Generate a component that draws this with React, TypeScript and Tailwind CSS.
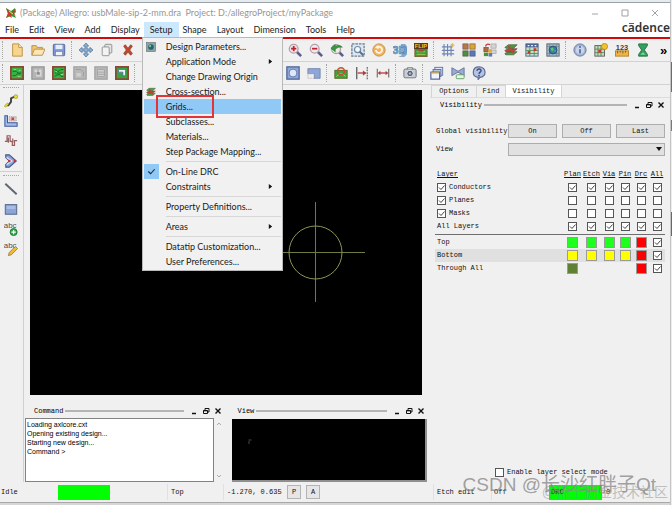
import { useState } from 'react';
import type { ReactNode } from 'react';
import clsx from 'clsx';

const MONO = "font-['Liberation_Mono',monospace] text-[7px] leading-[9px]";
const UI = "font-['Lato',sans-serif] text-[9px] leading-[15px]";

const ICONS: Record<string, ReactNode> = {
  newFile: <><path d="M3 1h7l4 4v10H3z" fill="#f6d58c" stroke="#b98b3c" /><path d="M10 1v4h4" fill="#fff3d0" stroke="#b98b3c" /></>,
  open: <><path d="M1 14V3h5l1 2h6v3" fill="#f2c773" stroke="#b58a45" /><path d="M4 7h12l-3 7H1z" fill="#fbe6b8" stroke="#b58a45" /></>,
  save: <><rect x="1.5" y="1.5" width="13" height="13" rx="1" fill="#7d98d6" stroke="#4d5f94" /><rect x="4" y="2" width="8" height="5" fill="#e7edf9" /><rect x="4" y="9.500" width="8" height="5" fill="#f2f2f2" stroke="#6b7690" strokeWidth=".7" /></>,
  move: <><path d="M8 0l3 3.500H9.200v3.300h3.300V5L16 8l-3.500 3V9.200H9.200v3.300H11L8 16l-3-3.500h1.800V9.200H3.500V11L0 8l3.500-3v1.800h3.300V3.500H5z" fill="#8fb1d3" stroke="#456d95" strokeWidth=".8" /></>,
  copy: <><rect x="5.500" y="1.500" width="8" height="10" rx="1" fill="#e4e4e4" stroke="#8a8a8a" /><rect x="2.500" y="4.500" width="8" height="10" rx="1" fill="#f3f3f3" stroke="#8a8a8a" /></>,
  del: <path d="M3 3.500l2-1.500L8 6l3-4 2 1.500L10 8l3 4-2 2-3-3.500L5 14l-2-2 3-4z" fill="#c2482c" stroke="#7c2f1c" strokeWidth=".7" />,
  zoomIn: <><path d="M10 10l5 5" stroke="#5d5e8e" strokeWidth="3" /><circle cx="6.500" cy="6.500" r="5" fill="#efe9ef" stroke="#b79da6" strokeWidth="1.500" /><path d="M6.500 3.500v6M3.500 6.500h6" stroke="#c2202c" strokeWidth="2" /></>,
  zoomOut: <><path d="M10 10l5 5" stroke="#5d5e8e" strokeWidth="3" /><circle cx="6.500" cy="6.500" r="5" fill="#efe9ef" stroke="#b79da6" strokeWidth="1.500" /><path d="M3.500 6.500h6" stroke="#c2202c" strokeWidth="2" /></>,
  zoomPrev: <><path d="M10 10l5 5" stroke="#5d5e8e" strokeWidth="3" /><circle cx="7" cy="7" r="5" fill="#f3e9e4" stroke="#a9a0a0" strokeWidth="1.500" /><path d="M1 6l5-4v2c4-2 7-1 8 1-3-1-5 0-8 2v3z" fill="#2f9c3d" stroke="#1f6b2a" strokeWidth=".6" /></>,
  zoomFit: <><rect x="1" y="1" width="14" height="14" fill="#dfe7ee" stroke="#6a7f94" strokeWidth="1.500" strokeDasharray="3 1" /><circle cx="7.500" cy="7.500" r="3.500" fill="#f4f8fb" stroke="#6e8aa6" strokeWidth="1.400" /><path d="M10 10l4 4" stroke="#5d6f90" strokeWidth="2.200" /></>,
  refresh: <><circle cx="8" cy="8" r="7" fill="#f3b45c" stroke="#c08a48" /><path d="M4.500 8a3.500 3.500 0 1 0 1.500-3" fill="none" stroke="#fff6e4" strokeWidth="2" /><path d="M7.500 2v5l-4-2z" fill="#fff6e4" /></>,
  green: <><rect x="1" y="1" width="14" height="14" fill="#38b344" stroke="#8a4a35" strokeWidth="2" /><path d="M3 6h4l2 2h4M3 11h3l2-2h4" stroke="#1b6425" fill="none" strokeWidth="1" /><path d="M4 4h3M10 5h2M9 12h3" stroke="#92df8c" /></>,
  greenNet: <><rect x="1" y="1" width="14" height="14" fill="#38b344" stroke="#8a4a35" strokeWidth="2" /><path d="M3 4l3 2h2l2-2h3M3 12l3-2h3l2 2h2M3 8h10" stroke="#155c20" fill="none" strokeWidth="1" /><path d="M4 6l2 1M10 10l3-1" stroke="#b9e8a8" /></>,
  greenShape: <><rect x="1" y="1" width="14" height="14" fill="#38a344" stroke="#8a4a35" strokeWidth="2" /><path d="M4 4h8v7H9V7H4z" fill="#edf4ff" stroke="#4963a8" strokeWidth=".8" /></>,
  grayPad: <><rect x="1" y="1" width="14" height="14" fill="#b4b4b4" stroke="#989898" strokeWidth="1.500" /><path d="M4 4h3v3H4zM9 4h3v8H6V9h3z" fill="#d8d8d8" /><rect x="7" y="7" width="3" height="3" fill="#8a8a8a" /></>,
  grayBox: <><rect x="1" y="1" width="14" height="14" fill="#b8b8b8" stroke="#a3a3a3" strokeWidth="1.500" /><path d="M3 4h6l3 3v5" stroke="#9a9a9a" fill="none" /><rect x="4" y="8" width="5" height="4" fill="#cecece" /></>,
  grayList: <><rect x="1" y="1" width="14" height="14" fill="#b8b8b8" stroke="#a3a3a3" strokeWidth="1.500" /><path d="M4 4h8v8H4zM4 7h8M4 9.500h8" stroke="#a2a2a2" fill="#cfcfcf" /></>,
  blueCircle: <><rect x="1" y="1" width="14" height="14" fill="#8ea7d6" stroke="#52679a" strokeWidth="1.500" /><circle cx="8" cy="8" r="4.500" fill="#dfe8f7" stroke="#5b74ad" /></>,
  blueCut: <><path d="M1 3h14v11H8V9H1z" fill="#8ea7d6" stroke="#7285ad" /><path d="M1 9h7v5H1z" fill="#eee" stroke="#aaa" strokeDasharray="1 1" /></>,
  board: <><rect x="1" y="5" width="14" height="9" fill="#3fa63a" stroke="#5c6f2d" strokeWidth="1.200" /><path d="M3 12l3-3h4l3 3" stroke="#b9dd7a" fill="none" /><circle cx="8" cy="6" r="4" fill="none" stroke="#c84b32" strokeWidth="1.600" /></>,
  spaceIn: <><path d="M2 1v14" stroke="#555" strokeWidth="1.400" /><path d="M14 1v14" stroke="#666" strokeWidth="1.400" strokeDasharray="2 1" /><path d="M3 8h9" stroke="#b33a3a" strokeWidth="1.500" /><path d="M9 5l4 3-4 3z" fill="#b33a3a" /></>,
  dim: <><path d="M1.500 3v10M14.500 3v10" stroke="#777" strokeWidth="1.400" /><path d="M4 8h8" stroke="#b33a3a" strokeWidth="1.500" /><path d="M5 5.500L2 8l3 2.500zM11 5.500L14 8l-3 2.500z" fill="#b33a3a" /></>,
  camera: <><rect x="1" y="3.500" width="14" height="10" rx="1.500" fill="#c9cdd2" stroke="#666d78" /><path d="M5 3.500V2h6v1.500" stroke="#666d78" fill="#ddd" /><circle cx="8" cy="8.500" r="3.700" fill="#55617a" stroke="#eee" /><circle cx="8" cy="8.500" r="1.500" fill="#a7b8d4" /></>,
  grid: <><path d="M3.500 1v14M7.500 1v14M11.500 3v12M1 4.500h12M1 8.500h14M1 12.500h14" stroke="#6e86b5" strokeWidth="1.300" /><path d="M13 0v5M10.500 2.500h5M11.300 1l3.400 3M14.700 1l-3.400 3" stroke="#e0b04a" strokeWidth=".9" /></>,
  palette: <><rect x="1" y="1" width="6" height="6" fill="#b57a42" stroke="#745" strokeWidth=".7" /><rect x="9" y="1" width="6" height="6" fill="#d8a72e" stroke="#745" strokeWidth=".7" /><rect x="1" y="9" width="6" height="6" fill="#4f8e3c" stroke="#454" strokeWidth=".7" /><rect x="9" y="9" width="6" height="6" fill="#5b77bd" stroke="#456" strokeWidth=".7" /></>,
  paletteMove: <><path d="M9 1h6v5H9zM9 8h6v4H9z" fill="#d4d4d4" stroke="#999" strokeWidth=".7" /><rect x="1" y="5" width="5" height="5" fill="#b06a3e" stroke="#644" strokeWidth=".7" /><rect x="6" y="7" width="4" height="4" fill="#dfae31" /><rect x="1" y="11" width="5" height="4" fill="#4f8e3c" /><rect x="6.500" y="11.500" width="4" height="4" fill="#5b77bd" /><path d="M3 4c0-3 3-3 5-2" stroke="#c33" fill="none" strokeWidth="1.500" /></>,
  layers: <><path d="M1 12l4-2h10l-4 3.500H2z" fill="#4d9d3e" stroke="#3c4a2b" strokeWidth=".7" /><path d="M1 8.500l4-2h10l-4 3.500H2z" fill="#c4463a" stroke="#5b342b" strokeWidth=".7" /><path d="M1 5l4-3h10l-4 4H2z" fill="#4f9b43" stroke="#3c4a2b" strokeWidth=".7" /><path d="M5 3l6 9" stroke="#a8503c" strokeWidth="2" /></>,
  constraint: <><rect x="1" y="1" width="14" height="14" fill="#c7dcd1" stroke="#4c6379" /><path d="M1 1h14v4H1z" fill="#4a6596" /><path d="M3 3h2M7 3h2M11 3h2" stroke="#fff" strokeWidth="1.300" /><path d="M5.500 5v10M10.500 5v10M1 8.500h14M1 12h14" stroke="#4f8f52" /><path d="M3 9h3v3H3zM10 6h3v3h-3z" fill="#c8372d" /></>,
  world: <><rect x="1" y="1" width="14" height="14" fill="#a9b8c4" stroke="#51606f" /><path d="M1 4h14M1 12h14M4 1v14M12 1v14" stroke="#6d7b89" strokeWidth=".7" /><circle cx="8" cy="8" r="4.500" fill="#327eae" stroke="#24506c" /><path d="M5 6l3-1 1 2-2 3zM9 9l2-1v2z" fill="#63c26a" /></>,
  info: <><circle cx="8" cy="8" r="7" fill="#9fb0cd" stroke="#66779b" /><circle cx="8" cy="8" r="5" fill="#c9d4e8" /><path d="M8 7v5" stroke="#3c62b0" strokeWidth="1.800" /><circle cx="8" cy="4.500" r="1.100" fill="#3c62b0" /></>,
  report: <><rect x="1" y="3" width="11" height="12" fill="#c6dcc0" stroke="#555" /><path d="M4.500 3v12M8 3v12M1 7h11M1 11h11" stroke="#52804f" /><path d="M5 8h3v3H5z" fill="#c8372d" /><circle cx="12" cy="4" r="3.500" fill="#f2c32c" stroke="#b68a17" /></>,
  measure: <><rect x=".5" y="9" width="15" height="6" fill="#eeb548" stroke="#b27d23" /><path d="M3 9v3M6 9v2M9 9v3M12 9v2" stroke="#83591a" /><text x="8" y="7.500" textAnchor="middle" fontSize="8.500" fontWeight="700" fontFamily="Liberation Sans" fill="#3c3c50">123</text></>,
  hourglass: <><path d="M3 1h10v2L9.500 8l3.500 5v2H3v-2l3.500-5L3 3z" fill="#31a15b" stroke="#236c41" /><path d="M5 13.500l3-3 3 3z" fill="#7fd79b" /></>,
  sheets: <><rect x="5.500" y="1.500" width="9" height="9" fill="#dfe6f5" stroke="#5a6c9c" /><rect x="3.500" y="4" width="9" height="8" fill="#b8c5e4" stroke="#5a6c9c" /><rect x="1" y="7" width="10" height="8" fill="#f1f4fb" stroke="#4c5f95" strokeWidth="1.300" /><path d="M1.500 8h9" stroke="#e0b33c" strokeWidth="1.500" /></>,
  bowtie: <><path d="M1 2l7 4 7-4v9L8 7l-7 4z" fill="#9aabd4" stroke="#5f6f9b" /><rect x="6" y="10" width="9" height="4.500" rx="1" fill="#e8f5e6" stroke="#5c9a5c" /></>,
  help: <><path d="M8 1c9 0 9 12 1 12l-2 2.500V13C-1 12 0 1 8 1z" fill="#b6c2de" stroke="#5d6c94" strokeWidth="1.300" /><path d="M5.800 5.500c0-3 5-2.500 4.500 0-.3 1.500-2 1.500-2.200 3.500" fill="none" stroke="#34508f" strokeWidth="1.700" /><circle cx="8" cy="11" r="1" fill="#34508f" /></>,
  route: <><path d="M2 13h3l3-4V5l4-2h3" fill="none" stroke="#444" strokeWidth="2.200" /><path d="M0 14l4-4 1 2-3 3z" fill="#e5d62e" stroke="#9a901e" strokeWidth=".5" /><circle cx="13.500" cy="3" r="2.200" fill="#e9dc3d" stroke="#988d22" strokeWidth=".7" /></>,
  slide: <><path d="M1 2h3v8h11v4H1z" fill="#a7bbe7" stroke="#3e5a9d" strokeWidth="1.200" /><path d="M6 3h8v5H6z" fill="#e3c4c4" stroke="#998" strokeDasharray="1 1" /><path d="M8.500 4h3v3h-3z" fill="#bd4b4b" /></>,
  delay: <path d="M1 8.500h2.500V2h3.500v6.500h2.500V13h2.500V7.500h3M5 4v6M10 5v5" fill="none" stroke="#96605f" strokeWidth="1.400" />,
  vertex: <><path d="M2 1h4l8 7-8 7H2v-3l4-4-4-4z" fill="#8fa6d6" stroke="#3e5590" strokeWidth="1.200" /><path d="M3 4l6 4-6 4" fill="none" stroke="#e5ecfa" strokeWidth="1.200" /><circle cx="6" cy="8" r="1.500" fill="#c33" /><circle cx="12.500" cy="8" r="1.500" fill="#c33" /></>,
  line: <path d="M1.500 2l13 12" stroke="#5d6673" strokeWidth="2.200" />,
  rect: <><rect x="1.500" y="3" width="13" height="11" fill="#8ba5d8" stroke="#5c6c8d" strokeWidth="1.200" /><path d="M3 4.500h10V8H3z" fill="#a9bde6" /></>,
  textAdd: <><text x="7" y="7" textAnchor="middle" fontSize="9" fontFamily="Liberation Sans" fill="#4b4b4b">abc</text><circle cx="11" cy="11.500" r="4" fill="#31a84b" stroke="#1c7431" /><path d="M11 9v5M8.500 11.500h5" stroke="#fff" strokeWidth="1.300" /></>,
  textEdit: <><text x="7" y="7" textAnchor="middle" fontSize="9" fontFamily="Liberation Sans" fill="#4b4b4b">abc</text><path d="M13 5l2.500 2.500-7 7-3.500 1 1-3.500z" fill="#efb93a" stroke="#8b6a24" strokeWidth=".8" /></>,
  param: <><rect x="1" y="1" width="14" height="14" fill="#90a3a6" stroke="#5c6c70" /><circle cx="8" cy="8" r="4.500" fill="#23676b" /><circle cx="6.500" cy="6.500" r="1.700" fill="#7fd1b4" /></>,
  threeD: <><path d="M9 1h5l2 3v9l-3 3H6l4-2z" fill="#86a9cb" /><text x="7.500" y="13" textAnchor="middle" fontSize="13" fontWeight="700" fontFamily="Liberation Sans" fill="#7fb0dc" stroke="#4b78a5" strokeWidth=".6">3D</text></>,
  flip: <><rect x="0" y="0" width="16" height="7" fill="#5a3823" /><text x="8" y="6" textAnchor="middle" fontSize="6.500" fontWeight="700" fontFamily="Liberation Sans" fill="#f4c32c">FLIP</text><rect x="1" y="7.500" width="14" height="8" fill="#3f9b3d" stroke="#7b5c30" /><path d="M3 10h10M3 13h10" stroke="#a7cf58" /><path d="M5 9h6" stroke="#c33" strokeWidth="1.500" /></>,
};

type MenuEntry = { label: string; icon?: string; submenu?: boolean; checked?: boolean; active?: boolean } | null;

const SETUP_MENU: MenuEntry[] = [
  { label: 'Design Parameters...', icon: 'param' },
  { label: 'Application Mode', submenu: true },
  { label: 'Change Drawing Origin' },
  { label: 'Cross-section...', icon: 'layers' },
  { label: 'Grids...', active: true },
  { label: 'Subclasses...' },
  { label: 'Materials...' },
  { label: 'Step Package Mapping...' },
  null,
  { label: 'On-Line DRC', checked: true },
  { label: 'Constraints', submenu: true },
  null,
  { label: 'Property Definitions...' },
  null,
  { label: 'Areas', submenu: true },
  null,
  { label: 'Datatip Customization...' },
  { label: 'User Preferences...' },
];

const MENUS = ['File', 'Edit', 'View', 'Add', 'Display', 'Setup', 'Shape', 'Layout', 'Dimension', 'Tools', 'Help'];

const COLUMNS = ['Plan', 'Etch', 'Via', 'Pin', 'Drc', 'All'];

const GROUPS = [
  { label: 'Conductors', own: true, on: true },
  { label: 'Planes', own: true, on: false },
  { label: 'Masks', own: true, on: false },
  { label: 'All Layers', own: false, on: true },
];

const LAYERS = [
  { label: 'Top', colors: ['bg-[#1eff1e]', 'bg-[#1eff1e]', 'bg-[#1eff1e]', 'bg-[#1eff1e]', 'bg-[#ff0000]'] },
  { label: 'Bottom', colors: ['bg-[#ffff00]', 'bg-[#ffff00]', 'bg-[#ffff00]', 'bg-[#ffff00]', 'bg-[#ff0000]'], selected: true },
  { label: 'Through All', colors: ['bg-[#5f8133]', '', '', '', 'bg-[#ff0000]'] },
];

function Icon({ name, className = 'size-[14px]' }: { name: string; className?: string }) {
  return <svg viewBox="0 0 16 16" className={clsx('block', className)} aria-hidden="true">{ICONS[name]}</svg>;
}

function Tools({ names, vertical }: { names: string[]; vertical?: boolean }) {
  return (
    <div className={clsx('flex shrink-0', vertical && 'flex-col')}>
      {names.map(n => (
        <button key={n} type="button" aria-label={n} className={clsx('flex items-center justify-center', vertical ? 'h-5 w-full' : 'h-[22px] w-[21px]')}>
          <Icon name={n} />
        </button>
      ))}
    </div>
  );
}

function Handle() {
  return <div className="mx-[2px] h-[18px] w-[2px] shrink-0 self-center border-l border-dotted border-[#a5a5a5]" />;
}

function Check({ label, initial = false, text }: { label: string; initial?: boolean; text?: boolean }) {
  const [on, setOn] = useState(initial);
  return (
    <label className="inline-flex items-center gap-[3px] align-middle">
      <span className="relative block size-[9px]">
        <input
          type="checkbox"
          aria-label={label}
          checked={on}
          onChange={e => setOn(e.target.checked)}
          className="block size-[9px] appearance-none border border-[#555] bg-white"
        />
        {on && (
          <svg viewBox="0 0 9 9" className="pointer-events-none absolute inset-0 size-[9px]">
            <path d="M2 4.500l2 2L7.500 2.500" fill="none" stroke="#444" />
          </svg>
        )}
      </span>
      {text && <span>{label}</span>}
    </label>
  );
}

function DockHeader({ title }: { title: string }) {
  return (
    <div className={clsx('flex h-[14px] items-center pl-[9px] text-black', MONO)}>
      <span>{title}</span>
      <div className="ml-[2px] h-[2px] flex-1 bg-[#b4b4b4]" />
      <div className="ml-1 flex">
        <button type="button" aria-label="Minimize" className="flex h-3 w-3 items-center justify-center">
          <svg viewBox="0 0 8 8" className="size-2"><path d="M2 6.500h4" stroke="#111" strokeWidth="1.500" /></svg>
        </button>
        <button type="button" aria-label="Float" className="flex h-3 w-3 items-center justify-center">
          <svg viewBox="0 0 8 8" className="size-2"><path d="M3 3V1.500h4V5H5.500M1.500 3.500h4v3h-4zM3 1.500h4M1.500 3.800h4" fill="none" stroke="#111" /></svg>
        </button>
        <button type="button" aria-label="Close" className="flex h-3 w-3 items-center justify-center">
          <svg viewBox="0 0 8 8" className="size-2"><path d="M1.500 1.500l5 5M6.500 1.500l-5 5" stroke="#111" strokeWidth="1.400" /></svg>
        </button>
      </div>
    </div>
  );
}

function SetupMenu() {
  return (
    <ul role="menu" className={clsx('absolute -left-[2px] top-full z-20 w-[141px] border border-[#b9b9b9] bg-[#f1f1f1] p-px text-[#1a1a1a]', UI)}>
      {SETUP_MENU.map((item, i) =>
        item === null ? (
          <li key={i} role="separator" className="ml-[22px] flex h-[5px] items-center"><span className="h-px w-full bg-[#d7d7d7]" /></li>
        ) : (
          <li key={item.label} role="none" className="relative">
            <button type="button" role="menuitem" className={clsx('flex h-[15px] w-full items-center text-left', item.active && 'bg-[#90c8f6]')}>
              <span className={clsx('mr-[7px] flex size-[15px] items-center justify-center', item.checked && 'bg-[#90c8f6]')}>
                {item.icon && <Icon name={item.icon} className="size-[10px]" />}
                {item.checked && <svg viewBox="0 0 10 10" className="size-[9px]"><path d="M1.500 5l2.500 2.500 4.500-5" fill="none" stroke="#222" strokeWidth="1.200" /></svg>}
              </span>
              <span className="flex-1">{item.label}</span>
              {item.submenu && <svg viewBox="0 0 6 6" className="mr-2 size-[5px]"><path d="M1 0l4 3-4 3z" fill="#111" /></svg>}
            </button>
            {item.active && <div className="pointer-events-none absolute -top-[4px] left-[12px] z-10 h-[23px] w-[58px] border-2 border-[#e23338]" />}
          </li>
        )
      )}
    </ul>
  );
}

function TitleBar() {
  return (
    <header className="bg-white">
      <div className="h-[2px] bg-[#e6ebee]" />
      <div className="flex h-5 items-center border-t border-[#9aa3aa] pl-[5px]">
        <svg viewBox="0 0 12 12" className="size-3">
          <path d="M1 1l5 3 4-3 1 4-2 2 2 4-5-2-5 2 2-4z" fill="#2f9a38" />
          <path d="M1 1l4 4 2 6-3-2-3 2 2-5zM7 5l4-3-2 4 2 4z" fill="#d8342b" />
          <path d="M4 4l4 3" stroke="#f2e04c" />
        </svg>
        <h1 className={clsx('ml-[3px] flex-1 whitespace-pre text-[#969696]', UI)}>
          {'(Package) Allegro: usbMale-sip-2-mm.dra  Project: D:/allegroProject/myPackage'}
        </h1>
        {['M1 5h6', 'M1 1h6v6H1z', 'M1 1l6 6M7 1l-6 6'].map((d, i) => (
          <button key={d} type="button" aria-label={['Minimize', 'Maximize', 'Close'][i]} className="flex h-full w-[30px] items-center justify-center">
            <svg viewBox="0 0 8 8" className="size-2"><path d={d} fill="none" stroke="#8a8a8a" strokeWidth=".8" /></svg>
          </button>
        ))}
      </div>
      <nav className={clsx('flex h-[15px] text-[#1c1c1c]', UI)}>
        {MENUS.map(m => (
          <div key={m} className="relative -ml-px -mr-px">
            <button type="button" className={clsx('h-[15px] px-[6px]', m === 'Setup' && 'bg-[#cce8ff]')}>{m}</button>
            {m === 'Setup' && <SetupMenu />}
          </div>
        ))}
        <div className="ml-auto font-['Noto_Sans',sans-serif] text-[12px] leading-[12px] font-semibold text-[#333]">
          c<span className="relative">a<span className="absolute left-px top-[4px] h-px w-[5px] bg-[#e0243a]" /></span>dence
        </div>
      </nav>
      <div className="h-[2px] bg-[#cc0c0c]" />
    </header>
  );
}

function Toolbars() {
  return (
    <div>
      <div className="flex h-[23px] items-center border-b border-[#d2d2d2]">
        <Handle />
        <Tools names={['newFile', 'open', 'save']} />
        <Handle />
        <Tools names={['move', 'copy', 'del']} />
        <div className="ml-auto flex items-center">
          <Tools names={['zoomIn', 'zoomOut', 'zoomPrev', 'zoomFit', 'refresh', 'threeD', 'flip']} />
          <Handle />
          <Tools names={['grid', 'palette', 'paletteMove', 'layers', 'constraint', 'world']} />
          <Handle />
          <Tools names={['info', 'report', 'measure', 'hourglass']} />
          <button type="button" className="w-[17px] pl-1 font-['Liberation_Sans',sans-serif] text-[13px] leading-[15px] font-bold text-black">»</button>
        </div>
      </div>
      <div className="flex h-[23px] items-center border-b border-[#d2d2d2]">
        <Handle />
        <Tools names={['green', 'grayPad', 'greenNet', 'grayBox', 'grayList', 'greenShape']} />
        <Handle />
        <div className="ml-auto flex w-[388px] items-center">
          <Tools names={['blueCircle', 'blueCut']} />
          <Handle />
          <Tools names={['board', 'spaceIn', 'dim']} />
          <Handle />
          <Tools names={['camera']} />
          <Handle />
          <Tools names={['sheets', 'bowtie', 'help']} />
        </div>
      </div>
    </div>
  );
}

function VisibilityPanel() {
  return (
    <aside className={clsx('flex w-[240px] shrink-0 flex-col text-[#111]', MONO)}>
      <div role="tablist" className="flex h-[13px] items-end border-b border-[#dcdcdc] pl-px">
        <button type="button" role="tab" className="h-3 w-[46px] border border-b-0 border-[#d5d5d5]">Options</button>
        <button type="button" role="tab" className="h-3 w-[29px] border border-b-0 border-l-0 border-[#d5d5d5]">Find</button>
        <button type="button" role="tab" aria-selected="true" className="h-[13px] w-14 border border-b-0 border-l-0 border-[#d5d5d5] bg-white">Visibility</button>
      </div>
      <div className="pl-px pr-[3px]"><DockHeader title="Visibility" /></div>
      <div className="mt-3 flex items-center gap-[5px] pl-[6px] pr-[5px]">
        <span className="w-[67px] whitespace-nowrap">Global visibility</span>
        {['On', 'Off', 'Last'].map(b => (
          <button key={b} type="button" className="h-[14px] flex-1 border border-[#adadad] bg-[#e1e1e1]">{b}</button>
        ))}
      </div>
      <div className="mt-[5px] flex items-center gap-[5px] pl-[6px] pr-[5px]">
        <label htmlFor="view" className="w-[67px]">View</label>
        <div className="relative flex-1">
          <select id="view" className="block h-[13px] w-full appearance-none border border-[#adadad] bg-[#e1e1e1]"><option></option></select>
          <svg viewBox="0 0 6 4" className="pointer-events-none absolute right-[3px] top-[4px] h-1 w-[6px]"><path d="M0 0h6L3 4z" fill="#111" /></svg>
        </div>
      </div>
      <table className="mt-3 ml-[5px] mr-[5px] table-fixed border-collapse text-center">
        <thead>
          <tr className="h-[13px]">
            <th className="p-0 pl-[2px] text-left font-normal underline">Layer</th>
            {COLUMNS.map(c => (
              <th key={c} className={clsx('p-0 font-normal underline', c === 'Plan' || c === 'Etch' ? 'w-[19px]' : 'w-4')}>{c}</th>
            ))}
          </tr>
        </thead>
        <tbody>
          {GROUPS.map(g => (
            <tr key={g.label} className="h-[13px]">
              <td className="p-0 pl-[2px] text-left leading-[9px]">{g.own ? <Check label={g.label} initial text /> : g.label}</td>
              {COLUMNS.map(c => <td key={c} className="p-0 leading-[9px]"><Check label={`${g.label} ${c}`} initial={g.on} /></td>)}
            </tr>
          ))}
          <tr className="h-[3px]"><td colSpan={7} className="p-0"><div className="h-px bg-[#6e6e6e]" /></td></tr>
          {LAYERS.map(l => (
            <tr key={l.label} className={clsx('h-[13px]', l.selected && 'bg-[#e0e0e0]')}>
              <td className="p-0 pl-[2px] text-left">{l.label}</td>
              {l.colors.map((c, i) => (
                <td key={i} className="p-0 leading-[11px]">
                  {c && <button type="button" aria-label={`${l.label} ${COLUMNS[i]} color`} className={clsx('inline-block size-[11px] border border-[#9a9a9a] align-middle', c)} />}
                </td>
              ))}
              <td className="p-0 leading-[9px]"><Check label={`${l.label} All`} initial /></td>
            </tr>
          ))}
        </tbody>
      </table>
      <div className="mt-auto flex pb-[5px] pl-[65px]">
        <Check label="Enable layer select mode" text />
      </div>
    </aside>
  );
}

function Workspace() {
  return (
    <main className="flex min-w-0 flex-1 flex-col">
      <div className="flex flex-1 pt-[5px] pr-2 pb-px pl-[6px]">
        <div className="relative flex-1 overflow-hidden bg-black">
          <svg viewBox="0 0 100 100" className="absolute left-[235px] top-[112px] size-[100px]">
            <g fill="none" stroke="#6f7c3e" strokeWidth="1"><path d="M0 50.500h100M50.500 0v100" /><circle cx="50.500" cy="50.500" r="26.500" stroke="#8c965a" /></g>
          </svg>
        </div>
      </div>
      <div className="flex gap-[5px] pt-2 pr-[3px] pl-px">
        <section className="flex flex-1 flex-col">
          <DockHeader title="Command" />
          <div className="flex h-[64px]">
            <textarea
              aria-label="Command log"
              readOnly
              className="h-full min-w-0 flex-1 resize-none overflow-hidden border border-[#828282] bg-white px-px pt-px font-['Liberation_Sans',sans-serif] text-[7px] leading-[9px] text-black"
              value={'Loading axlcore.cxt\nOpening existing design...\nStarting new design...\nCommand >'}
            />
            <div className="flex w-[10px] flex-col items-center justify-between py-1">
              <svg viewBox="0 0 6 4" className="h-1 w-[6px]"><path d="M1 3l2-2 2 2" fill="none" stroke="#aaa" /></svg>
              <svg viewBox="0 0 6 4" className="h-1 w-[6px]"><path d="M1 1l2 2 2-2" fill="none" stroke="#aaa" /></svg>
            </div>
          </div>
        </section>
        <section className="flex flex-1 flex-col">
          <DockHeader title="View" />
          <div className="mt-px ml-[3px] h-[63px] border-r-2 border-b-2 border-[#8f8f8f] bg-black">
            <svg viewBox="0 0 4 5" className="mt-5 ml-4 h-[5px] w-1"><path d="M.5 1h3M1 2v3" stroke="#5a5a5a" strokeWidth=".8" /></svg>
          </div>
        </section>
      </div>
    </main>
  );
}

function StatusBar() {
  return (
    <footer className={clsx('flex h-5 items-center text-[#111]', MONO)}>
      <div className="w-[58px] pl-px">Idle</div>
      <div className="mr-[57px] h-[15px] w-[52px] bg-[#00ff00]" />
      <div className="h-4 w-14 border-l border-[#e0e0e0] pl-[3px] leading-[16px]">Top</div>
      <div className="h-4 w-[61px] whitespace-nowrap border-l border-[#e0e0e0] pl-[3px] leading-[16px]">-1.270, 0.635</div>
      <div className="flex gap-[5px] pl-[3px]">
        <button type="button" className="h-[14px] w-[14px] border border-[#b4b4b4] bg-[#e6e6e6]">P</button>
        <button type="button" className="h-[14px] w-[14px] border border-[#b4b4b4] bg-[#e6e6e6]">A</button>
      </div>
      <div className="ml-auto flex w-[237px] items-center">
        <div className="h-4 w-[58px] border-l border-[#e0e0e0] pl-[3px] leading-[16px]">Etch edit</div>
        <div className="h-4 w-[58px] border-l border-[#e0e0e0] pl-[2px] leading-[16px]">Off</div>
        <div className="h-[15px] w-[53px] bg-[#00ff00] pl-[2px] leading-[15px]">DRC</div>
        <div className="pl-1">0</div>
      </div>
    </footer>
  );
}

export default function App() {
  return (
    <div className="flex min-h-screen bg-[#f0f0f0]">
      <div className="relative flex min-w-0 flex-1 flex-col">
        <TitleBar />
        <Toolbars />
        <div className="flex flex-1">
          <div className="flex w-6 shrink-0 flex-col border-r border-[#d0d0d0] pr-px">
            <div className="mx-[3px] my-[2px] h-[2px] border-t border-dotted border-[#a5a5a5]" />
            <Tools vertical names={['route', 'slide', 'delay', 'vertex']} />
            <div className="h-px bg-[#cfcfcf]" />
            <div className="mx-[3px] mt-[3px] mb-[2px] h-[2px] border-t border-dotted border-[#a5a5a5]" />
            <Tools vertical names={['line', 'rect', 'textAdd', 'textEdit']} />
          </div>
          <Workspace />
          <VisibilityPanel />
        </div>
        <StatusBar />
        <div className="h-[3px] border-t border-[#a8a8a8] bg-[#d6d6d6]" />
        {/* Watermarks */}
        <p className="pointer-events-none absolute right-[2px] bottom-[4px] whitespace-nowrap font-['Liberation_Sans','Noto_Sans_CJK_SC',sans-serif] text-[14px] leading-[17px] text-[#8f8f8f]/50">@稀土掘金技术社区</p>
        <p className="pointer-events-none absolute right-[14px] bottom-[9px] whitespace-nowrap font-['Liberation_Sans','Noto_Sans_CJK_SC',sans-serif] text-[19px] leading-[22px] text-[#8a8a8a]/80">CSDN @长沙红胖子Qt</p>
      </div>
      <div className="flex w-[2px] shrink-0 flex-col border-l border-[#c4c4c4] bg-[#e9eef2]">
        <div className="mt-[62px] h-[30px] bg-[#1f82cc]" />
        <div className="mt-[28px] h-[11px] bg-[#d9582b]" />
        <div className="mt-[81px] h-6 bg-[#2f6fd6]" />
      </div>
    </div>
  );
}
